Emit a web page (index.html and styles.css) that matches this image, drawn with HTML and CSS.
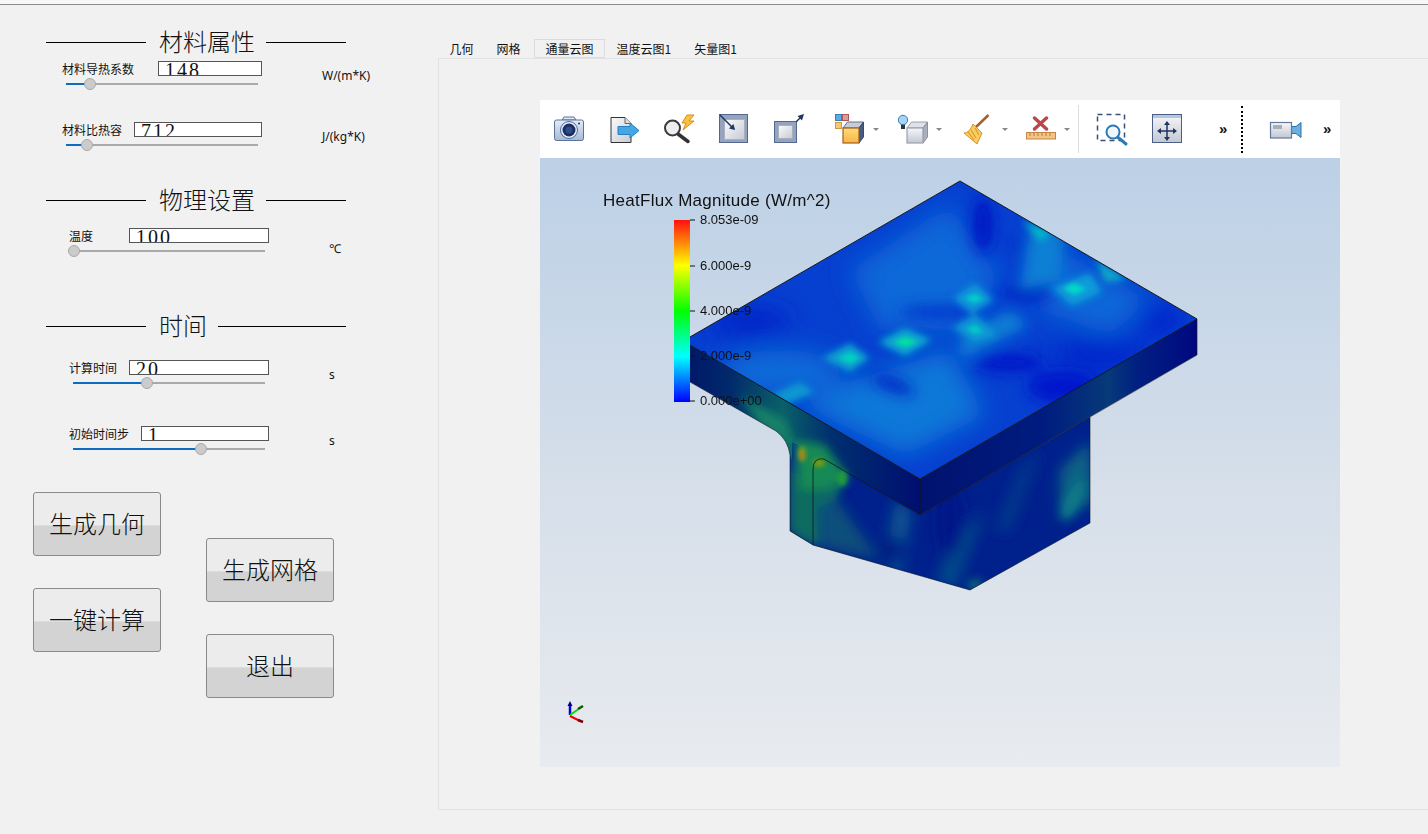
FILE: index.html
```html
<!DOCTYPE html>
<html lang="zh">
<head>
<meta charset="utf-8">
<title>通量云图</title>
<link rel="stylesheet" href="styles.css">
</head>
<body>
<svg class="defs" width="0" height="0" aria-hidden="true">
  <defs>
    <linearGradient id="gBlue" x1="0" y1="0" x2="0" y2="1"><stop offset="0" stop-color="#e4ecf8"/><stop offset="1" stop-color="#a6b9d6"/></linearGradient>
    <linearGradient id="gGray" x1="0" y1="0" x2="1" y2="1"><stop offset="0" stop-color="#fbfbfc"/><stop offset="1" stop-color="#c6cad3"/></linearGradient>
    <linearGradient id="gOrange" x1="0" y1="0" x2="0" y2="1"><stop offset="0" stop-color="#ffdc7a"/><stop offset="1" stop-color="#f8b545"/></linearGradient>
    <linearGradient id="gWhite" x1="0" y1="0" x2="0" y2="1"><stop offset="0" stop-color="#f6f7fa"/><stop offset="1" stop-color="#c2c7d2"/></linearGradient>
  </defs>
</svg>
<div class="topline"></div>
<div class="app">
  <aside class="side">
    <div class="head head-a"><i class="rule"></i><span class="head-text">材料属性</span><i class="rule rule-end"></i></div>
    <div class="field field-a field-first">
      <div class="field-main">
        <div class="field-top"><span class="lab">材料导热系数</span><div class="num num-104">148</div></div>
        <div class="slider slider-a"><i class="fill" style="width:12.5%"></i><i class="knob" style="left:12.5%"></i></div>
      </div>
      <span class="unit">W/(m*K)</span>
    </div>
    <div class="field field-a field-gap">
      <div class="field-main">
        <div class="field-top"><span class="lab">材料比热容</span><div class="num">712</div></div>
        <div class="slider slider-a"><i class="fill" style="width:10.9%"></i><i class="knob" style="left:10.9%"></i></div>
      </div>
      <span class="unit">J/(kg*K)</span>
    </div>

    <div class="head head-b"><i class="rule"></i><span class="head-text">物理设置</span><i class="rule rule-end"></i></div>
    <div class="field field-b field-temp">
      <div class="field-main">
        <div class="field-top"><span class="lab">温度</span><div class="num num-140">100</div></div>
        <div class="slider slider-t"><i class="fill" style="width:2.5%"></i><i class="knob" style="left:2.5%"></i></div>
      </div>
      <span class="unit unit-low">℃</span>
    </div>

    <div class="head head-c"><i class="rule"></i><span class="head-text">时间</span><i class="rule rule-end"></i></div>
    <div class="field field-b field-time">
      <div class="field-main">
        <div class="field-top"><span class="lab">计算时间</span><div class="num">20</div></div>
        <div class="slider slider-b"><i class="fill" style="width:38.5%"></i><i class="knob" style="left:38.5%"></i></div>
      </div>
      <span class="unit">s</span>
    </div>
    <div class="field field-b field-step">
      <div class="field-main">
        <div class="field-top"><span class="lab">初始时间步</span><div class="num">1</div></div>
        <div class="slider slider-b"><i class="fill" style="width:66.7%"></i><i class="knob" style="left:66.7%"></i></div>
      </div>
      <span class="unit">s</span>
    </div>

    <div class="btns">
      <div class="btn-col">
        <button class="btn">生成几何</button>
        <button class="btn">一键计算</button>
      </div>
      <div class="btn-col btn-col-low">
        <button class="btn">生成网格</button>
        <button class="btn">退出</button>
      </div>
    </div>
  </aside>

  <main class="work">
    <nav class="tabs">
      <span class="tab">几何</span>
      <span class="tab">网格</span>
      <span class="tab tab-on">通量云图</span>
      <span class="tab">温度云图1</span>
      <span class="tab">矢量图1</span>
    </nav>
    <section class="pane">
      <div class="view">
        <div class="tools">
          <svg class="ico" viewBox="0 0 32 32"><path d="M9 7l2-3h10l2 3z" fill="#dfe8f6" stroke="#5b7199"/><rect x="1.5" y="7" width="29" height="20.500" rx="2" fill="url(#gBlue)" stroke="#5b7199"/><circle cx="16" cy="17" r="8.500" fill="#e8eef8" stroke="#4a6a9a"/><circle cx="16" cy="17" r="6.500" fill="#1b2f63"/><circle cx="16" cy="17" r="3.500" fill="#2f4c8c"/><circle cx="26" cy="10.500" r="1" fill="#1b2f63"/></svg>
          <svg class="ico" viewBox="0 0 32 32"><path d="M2 4.500h14l6 6v19H2z" fill="url(#gGray)" stroke="#333"/><path d="M16 4.500v6h6" fill="#ddd" stroke="#666"/><path d="M9 13.500h12V10l9 7.500-9 7.500v-3.500H9z" fill="#45a6e4" stroke="#2b7fc0"/></svg>
          <svg class="ico" viewBox="0 0 32 32"><path d="M14 21l10 7.500" stroke="#333" stroke-width="3.500" stroke-linecap="round"/><circle cx="8.500" cy="15" r="7.500" fill="#eceef2" stroke="#3a3a3a" stroke-width="2"/><path d="M23 2h7l-5 6h5L19 17l3-7h-4z" fill="#f6c343" stroke="#e08a1a"/></svg>
          <svg class="ico" viewBox="0 0 32 32"><rect x="1.500" y="1.500" width="28" height="28" fill="#95a3bf" stroke="#51688f"/><rect x="6.500" y="6.500" width="20" height="20" fill="url(#gGray)" stroke="#a8b0c0"/><path d="M2 2l14 14" stroke="#1f3563" stroke-width="1.500"/><path d="M17 17l-6-1.500 4.500-4.500z" fill="#1f3563"/></svg>
          <svg class="ico" viewBox="0 0 32 32"><rect x="1.500" y="8.500" width="22" height="21" fill="#95a3bf" stroke="#51688f"/><rect x="5.500" y="12.500" width="14" height="13" fill="url(#gGray)" stroke="#a8b0c0"/><path d="M23 9l6-6" stroke="#1f3563" stroke-width="1.500"/><path d="M31 1l-2 6.500-4.500-4.500z" fill="#1f3563"/></svg>
          <span class="tool-drop"><svg class="ico" viewBox="0 0 32 32"><rect x="2.500" y="1.500" width="6" height="6" fill="#58ace2" stroke="#3a80b8"/><rect x="9.500" y="1.500" width="6" height="6" fill="#dd9a9a" stroke="#a85a5a"/><rect x="2.500" y="9.500" width="6" height="6" fill="#f6c873" stroke="#d09a3a"/><path d="M10 15l4.500-6h16L26 15z" fill="#c8ccd6" stroke="#667089"/><path d="M26 15l4.500-6v15L26 30z" fill="#4a5a80" stroke="#3c4a6c"/><rect x="10" y="15" width="16" height="15" fill="url(#gOrange)" stroke="#a06020" stroke-width="1.200"/></svg><i class="caret"></i></span>
          <span class="tool-drop"><svg class="ico" viewBox="0 0 32 32"><path d="M5 11h4v5H5z" fill="#333"/><circle cx="7" cy="7" r="4.700" fill="#a5d5f6" stroke="#3a7ab0"/><path d="M11 15l4.500-6h16L27 15z" fill="#dfe2e8" stroke="#9aa0ac"/><path d="M27 15l4.500-6v15L27 30z" fill="#aab0bc" stroke="#8a909c"/><rect x="11" y="15" width="16" height="15" fill="url(#gWhite)" stroke="#9aa0ac" stroke-width="1.200"/></svg><i class="caret"></i></span>
          <span class="tool-drop"><svg class="ico" viewBox="0 0 32 32"><path d="M26.500 2L14 14" stroke="#a0622a" stroke-width="2.500"/><path d="M11 11l9 9-5 11-13-11c4 0 7-4 9-9z" fill="#f8cc60" stroke="#d89020"/><path d="M9 17l5 8M6 19l6 8M13 15l4 7" stroke="#d89020" stroke-width="1" fill="none"/></svg><i class="caret"></i></span>
          <span class="tool-drop"><svg class="ico" viewBox="0 0 32 32"><path d="M10.500 5l12 11M22.500 5l-12 11" stroke="#b9484c" stroke-width="3.500" stroke-linecap="round"/><rect x="2.500" y="19.500" width="29" height="6.500" fill="#f2c487" stroke="#c48644"/><path d="M6 20v3M10 20v3M14 20v3M18 20v3M22 20v3M26 20v3" stroke="#b57a3e" stroke-width="1"/></svg><i class="caret"></i></span>
          <i class="sep"></i>
          <svg class="ico" viewBox="0 0 32 32"><rect x="1.500" y="1.500" width="27" height="26" fill="none" stroke="#3a4f78" stroke-width="1.500" stroke-dasharray="5 4"/><path d="M21.500 24l8.500 7" stroke="#2a7ab8" stroke-width="3" stroke-linecap="round"/><circle cx="17" cy="19" r="6.500" fill="#f1f6fb" stroke="#2a7ab8" stroke-width="2"/></svg>
          <svg class="ico" viewBox="0 0 32 32"><rect x="1.500" y="1.500" width="29" height="28" fill="url(#gWhite)" stroke="#4a5f88"/><rect x="2" y="2" width="28" height="3" fill="#b6c5de"/><path d="M16 10v16M8 18h16" stroke="#1f3563" stroke-width="1.500"/><path d="M16 8l-3 4h6zM16 28l-3-4h6zM6 18l4-3v6zM26 18l-4-3v6z" fill="#1f3563"/></svg>
          <span class="more">»</span>
          <i class="dots"></i>
          <svg class="ico" viewBox="0 0 32 32"><path d="M22 13.500h5l5-4v15l-5-4h-5z" fill="#6ab0e0" stroke="#2a70a8"/><rect x="1.500" y="9.500" width="21" height="15.500" fill="url(#gWhite)" stroke="#66789a" stroke-width="1.200"/><rect x="4" y="12" width="9" height="4" fill="#a9aeb8"/></svg>
          <span class="more">»</span>
        </div>

        <svg class="scene" viewBox="540 158 800 609">
          <defs>
            <linearGradient id="bg" x1="0" y1="0" x2="0" y2="1"><stop offset="0" stop-color="#bcd0e6"/><stop offset="0.55" stop-color="#d6dfea"/><stop offset="1" stop-color="#e8ebef"/></linearGradient>
            <linearGradient id="bar" x1="0" y1="0" x2="0" y2="1"><stop offset="0" stop-color="#ff1010"/><stop offset="0.25" stop-color="#ffff00"/><stop offset="0.5" stop-color="#00ff00"/><stop offset="0.75" stop-color="#00ffff"/><stop offset="1" stop-color="#0000ff"/></linearGradient>
            <linearGradient id="sideR" gradientUnits="userSpaceOnUse" x1="920" y1="0" x2="1197" y2="0"><stop offset="0" stop-color="#00126e"/><stop offset="0.45" stop-color="#001c80"/><stop offset="0.68" stop-color="#063a78"/><stop offset="0.78" stop-color="#012082"/><stop offset="1" stop-color="#00087f"/></linearGradient>
            <linearGradient id="sideL" gradientUnits="userSpaceOnUse" x1="683" y1="0" x2="920" y2="0"><stop offset="0" stop-color="#001668"/><stop offset="0.2" stop-color="#012a6c"/><stop offset="0.42" stop-color="#0a6068"/><stop offset="0.62" stop-color="#003070"/><stop offset="1" stop-color="#000e70"/></linearGradient>
            <clipPath id="clipTop"><polygon points="960,181 1197,319 920,479 683,341"/></clipPath>
            <clipPath id="clipBody"><path d="M683 341L960 181L1197 319V355L1090 417V523L970 590L813 545L790 531V455Q788 440 776 431L683 378Z"/></clipPath>
            <clipPath id="clipCol"><polygon points="790,440 830,462 920,515 1090,417 1090,523 970,590 813,545 790,531"/></clipPath>
            <filter id="b2" x="-50%" y="-50%" width="200%" height="200%"><feGaussianBlur stdDeviation="2"/></filter>
            <filter id="b3" x="-50%" y="-50%" width="200%" height="200%"><feGaussianBlur stdDeviation="3.500"/></filter>
            <filter id="b5" x="-50%" y="-50%" width="200%" height="200%"><feGaussianBlur stdDeviation="5"/></filter>
            <filter id="b7" x="-50%" y="-50%" width="200%" height="200%"><feGaussianBlur stdDeviation="7"/></filter>
            <filter id="b10" x="-50%" y="-50%" width="200%" height="200%"><feGaussianBlur stdDeviation="12"/></filter>
          </defs>
          <rect x="540" y="158" width="800" height="609" fill="url(#bg)"/>

          <g clip-path="url(#clipCol)">
            <rect x="780" y="400" width="320" height="200" fill="#00208c"/>
            <g filter="url(#b7)">
              <polygon points="790,450 816,470 880,560 790,540" fill="#07507c"/>
              <polygon points="895,500 912,510 900,580 885,560" fill="#0a5490"/>
              <polygon points="955,540 985,510 955,590 935,580" fill="#05488a"/>
              <polygon points="1060,470 1090,440 1095,500 1060,520" fill="#0a6484"/>
              <polygon points="1020,470 1040,450 1010,530 995,530" fill="#003a8c"/>
              <ellipse cx="950" cy="520" rx="14" ry="35" fill="#001488"/>
              <ellipse cx="890" cy="550" rx="14" ry="14" fill="#001a84"/>
            </g>
            <g filter="url(#b5)">
              <polygon points="792,470 816,480 818,545 792,530" fill="#0c6c60"/>
              <polygon points="815,480 845,480 835,500 815,510" fill="#0f6868"/>
              <ellipse cx="1073" cy="500" rx="7" ry="22" fill="#0a7a88" transform="rotate(25 1073 500)"/>
              <ellipse cx="975" cy="585" rx="8" ry="6" fill="#0a6a78"/>
            </g>
          </g>

          <g clip-path="url(#clipBody)">
            <polygon points="683,341 920,479 920,515 683,378" fill="url(#sideL)"/>
            <polygon points="920,479 1197,319 1197,355 920,515" fill="url(#sideR)"/>
            <polygon points="770,425 792,438 792,460 785,445" fill="#0c6c60"/>
            <g filter="url(#b5)">
              <polygon points="740,395 785,420 795,445 760,425" fill="#128268"/>
              <polygon points="795,440 825,445 850,480 825,490 800,490" fill="#128a55"/>
            </g>
            <g filter="url(#b2)">
              <ellipse cx="802" cy="454" rx="4" ry="8" fill="#6aa020"/>
              <ellipse cx="802" cy="455" rx="2" ry="4" fill="#d07010"/>
              <ellipse cx="819" cy="463" rx="6" ry="4" fill="#7a9a10"/>
              <ellipse cx="842" cy="478" rx="5" ry="8" fill="#1f9a40"/>
            </g>
            <rect x="680" y="175" width="520" height="310" fill="#0640d0" clip-path="url(#clipTop)"/>
            <g clip-path="url(#clipTop)">
              <g filter="url(#b10)">
                <polygon points="850,270 950,205 1000,280 960,330 880,330" fill="#0a68d8"/>
                <ellipse cx="780" cy="372" rx="60" ry="22" fill="#0a6cd8"/>
                <polygon points="840,385 950,350 985,415 905,455 800,405" fill="#0a78d8"/>
                <polygon points="1040,240 1150,300 1110,335 1040,310" fill="#0a68d8"/>
                <ellipse cx="750" cy="322" rx="42" ry="14" fill="#0020c8"/>
                <ellipse cx="1100" cy="355" rx="50" ry="18" fill="#0028cc"/>
                <ellipse cx="1160" cy="320" rx="25" ry="15" fill="#0020cc"/>
              </g>
              <g filter="url(#b7)">
                <ellipse cx="983" cy="225" rx="10" ry="28" fill="#0018c4"/>
                <ellipse cx="1027" cy="293" rx="24" ry="7" fill="#001cc4"/>
                <ellipse cx="893" cy="385" rx="22" ry="6" fill="#001cc4" transform="rotate(20 893 385)"/>
                <ellipse cx="1010" cy="363" rx="34" ry="9" fill="#0018c8"/>
                <ellipse cx="1063" cy="387" rx="36" ry="16" fill="#0014cc"/>
                <ellipse cx="1040" cy="245" rx="28" ry="6" fill="#0028c8"/>
                <ellipse cx="940" cy="312" rx="40" ry="6" fill="#0030cc"/>
                <polygon points="1030,230 1065,228 1060,280 1020,290" fill="#0a80d4"/>
                <polygon points="960,335 1010,310 1030,325 960,360" fill="#0a80d4"/>
              </g>
              <g filter="url(#b3)">
                <polygon points="1022,220 1052,232 1040,242" fill="#00b8c8"/>
                <polygon points="1095,258 1128,280 1105,282" fill="#08a8c8"/>
                <polygon points="1052,288 1090,273 1102,292 1072,306" fill="#0a9cd8"/>
                <polygon points="953,298 975,283 994,300 972,314" fill="#0a98d8"/>
                <polygon points="952,328 975,314 998,335 975,342" fill="#0a98d4"/>
                <polygon points="878,342 905,328 932,340 905,356" fill="#08a8d0"/>
                <polygon points="822,358 850,343 870,358 850,372" fill="#0aa0d0"/>
                <polygon points="770,395 800,382 815,392 785,405" fill="#0a98d0"/>
              </g>
              <g filter="url(#b2)">
                <polygon points="1063,288 1074,283 1086,289 1074,295" fill="#00d8c8"/>
                <polygon points="965,298 975,294 984,299 974,303" fill="#00d0c8"/>
                <polygon points="966,329 975,325 984,332 975,334" fill="#00ccc6"/>
                <polygon points="894,342 905,337 918,342 905,347" fill="#00e0a0"/>
                <polygon points="838,358 850,352 860,358 850,364" fill="#00d0c0"/>
              </g>
            </g>
          </g>

          <g fill="none" stroke="#10141c" stroke-width="1">
            <path d="M683 341L960 181L1197 319L920 479L683 341"/>
            <path d="M920 479V515"/>
            <path d="M1197 319V355L1090 417" stroke-width="0.600"/>
            <path d="M813 545V470Q813 457 824 459L920 515L1090 417" stroke-width="0.800"/>
            <path d="M1090 417V523L970 590L813 545L790 531V455Q788 440 776 431L683 378" stroke-width="0.600"/>
          </g>

          <rect x="674" y="220" width="16" height="182" fill="url(#bar)"/>
          <g stroke="#111" stroke-width="1">
            <path d="M690 220h5M690 266h5M690 311h5M690 356h5M690 401h5"/>
          </g>
          <text class="bar-title" x="603" y="206">HeatFlux Magnitude (W/m^2)</text>
          <text class="bar-label" x="700" y="224">8.053e-09</text>
          <text class="bar-label" x="700" y="270">6.000e-9</text>
          <text class="bar-label" x="700" y="315">4.000e-9</text>
          <text class="bar-label" x="700" y="360">2.000e-9</text>
          <text class="bar-label" x="700" y="405">0.000e+00</text>

          <path d="M570 715V705" stroke="#0000e0" stroke-width="2.500"/>
          <path d="M570 701l-2.500 5h5z" fill="#000090"/>
          <path d="M570 715L580 708" stroke="#00e000" stroke-width="2"/>
          <path d="M578 709l5-3" stroke="#006000" stroke-width="2.500"/>
          <path d="M570 716L580 721" stroke="#f00000" stroke-width="2"/>
          <path d="M578 720l5 2" stroke="#800000" stroke-width="2.500"/>
        </svg>
      </div>
    </section>
  </main>
</div>
</body>
</html>
```
FILE: styles.css
```css
* { box-sizing: border-box; }
html, body { margin: 0; padding: 0; height: 100%; overflow: hidden; }
body {
  background: #f1f1f1;
  font-family: "Noto Sans CJK SC", "Liberation Sans", sans-serif;
  color: #111;
}
.defs { position: absolute; }
.topline { height: 5px; background: #f7f7f7; border-bottom: 1px solid #8c8c8c; }
.app { display: flex; height: 829px; }

/* left column */
.side { width: 438px; flex: none; padding-top: 23px; }
.head { display: flex; align-items: center; width: 300px; height: 28px; margin-left: 46px; }
.head-b { margin-top: 34px; }
.head-c { margin-top: 54px; }
.rule { display: block; width: 100px; height: 1px; background: #000; }
.rule-end { width: auto; flex: 1; }
.head-text { margin: 0 11px 2px 13px; font-size: 24px; line-height: 28px; font-weight: 300; white-space: nowrap; }

.field { display: grid; grid-template-columns: 200px auto; column-gap: 60px; justify-content: start; }
.field-a { margin-left: 62px; }
.field-b { margin-left: 69px; }
.field-first { margin-top: 5px; }
.field-gap { margin-top: 31px; }
.field-temp { margin-top: 14px; }
.field-time { margin-top: 20px; }
.field-step { margin-top: 36px; }
.field-top { display: flex; align-items: center; justify-content: space-between; height: 15px; }
.lab { font-size: 12px; line-height: 15px; margin-bottom: 1px; white-space: nowrap; }
.num {
  flex: 1;
  margin-left: 12px;
  height: 15px;
  background: #fff;
  border: 1px solid #555;
  font-family: "Liberation Serif", serif;
  font-size: 20px;
  line-height: 17px;
  letter-spacing: 2px;
  padding-left: 6px;
  overflow: hidden;
}
.num-104 { flex: none; width: 104px; margin-left: 0; }
.num-140 { flex: none; width: 140px; margin-left: 0; }
.unit { font-family: "Noto Sans", "Noto Sans CJK SC", sans-serif; font-size: 12px; line-height: 16px; margin-top: 7px; }
.unit-low { margin-top: 13px; }

.slider { position: relative; height: 2px; margin-top: 7px; margin-bottom: 6px; background: #aaa; }
.slider-a { width: 192px; margin-left: 4px; }
.slider-t { width: 196px; }
.slider-b { width: 192px; margin-left: 4px; }
.fill { display: block; height: 2px; background: #0d6cbf; }
.knob {
  position: absolute;
  top: -5px;
  width: 12px;
  height: 12px;
  margin-left: -6px;
  border-radius: 50%;
  background: #cbcbcb;
  border: 1px solid #aaa;
}

.btns { display: flex; gap: 45px; margin: 36px 0 0 33px; }
.btn-col { display: flex; flex-direction: column; gap: 32px; }
.btn-col-low { margin-top: 46px; }
.btn {
  width: 128px;
  height: 64px;
  padding: 0 0 4px;
  border: 1px solid #8a8a8a;
  border-radius: 3px;
  background: linear-gradient(#ececec 0, #ececec 51%, #e4e4e4 52%, #d3d3d3 53%, #d3d3d3 100%);
  font-family: inherit;
  font-size: 24px;
  font-weight: 300;
  color: #111;
}

/* right column */
.work { flex: 1; min-width: 0; padding-top: 34px; }
.tabs { display: flex; height: 19px; font-size: 12px; line-height: 20px; }
.tab { padding: 0 11.500px; white-space: nowrap; }
.tab-on { margin-left: 2px; box-shadow: inset 0 0 0 1px #dcdcdc; background: #f1f1f1; }
.pane {
  height: 752px;
  border-top: 1px solid #e2e2e2;
  border-left: 1px solid #e2e2e2;
  border-bottom: 1px solid #e2e2e2;
  padding: 41px 0 0 101px;
}
.view { width: 800px; height: 667px; display: flex; flex-direction: column; }
.tools {
  height: 58px;
  flex: none;
  background: #fff;
  display: grid;
  grid-template-columns: 56px 55px 54px 55px 60px 63px 66px 62px 54px 18px 55px 67px 23px 28px 53px auto;
  align-items: center;
  padding-left: 13px;
}
.ico { display: block; width: 32px; height: 32px; overflow: visible; }
.tool-drop { display: flex; align-items: center; }
.caret {
  display: block;
  margin-left: 8px;
  width: 0;
  height: 0;
  border-left: 3px solid transparent;
  border-right: 3px solid transparent;
  border-top: 3px solid #888;
}
.sep { display: block; width: 1px; height: 48px; background: #dcdcdc; }
.more { font-family: "Liberation Sans", sans-serif; font-size: 15px; font-weight: 700; line-height: 16px; padding-left: 1px; }
.dots { display: block; width: 0; height: 47px; border-left: 2px dotted #000; }
.scene { display: block; width: 800px; height: 609px; flex: none; }
.bar-title { font-family: "Liberation Sans", sans-serif; font-size: 17px; letter-spacing: 0.270px; fill: #111; }
.bar-label { font-family: "Liberation Sans", sans-serif; font-size: 13px; fill: #111; }
```
